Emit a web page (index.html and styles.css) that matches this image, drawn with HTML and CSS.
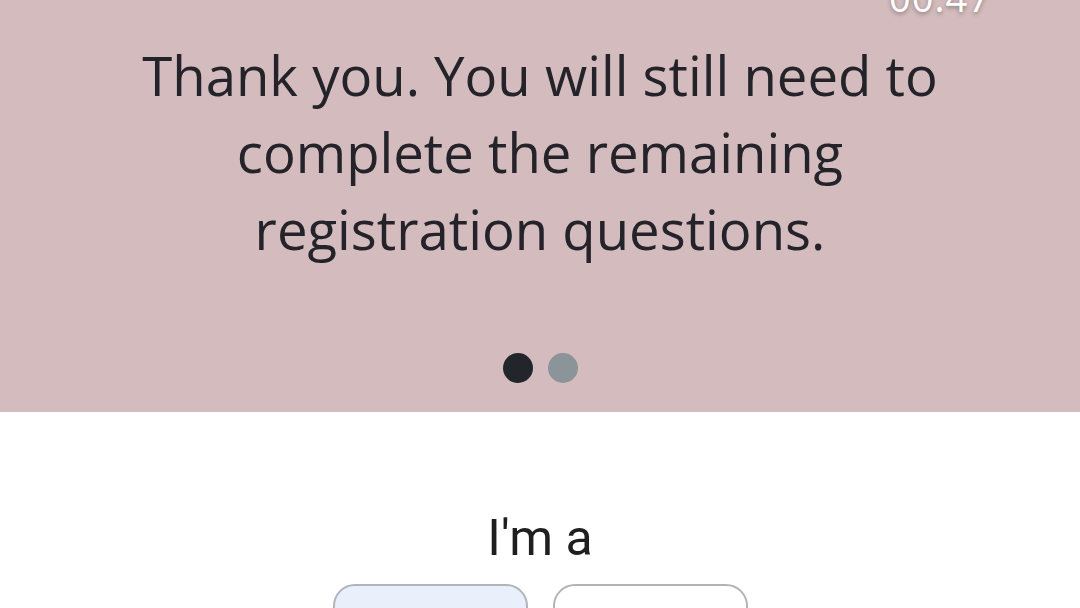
FILE: index.html
```html
<!DOCTYPE html>
<html lang="en">
<head>
<meta charset="utf-8">
<title>Registration</title>
<link rel="stylesheet" href="styles.css">
</head>
<body>
<div class="screen">
  <section class="hero">
    <div class="timer">00:47</div>
    <p class="message">Thank you. You will still need to complete the remaining registration questions.</p>
    <div class="dots">
      <span class="dot active"></span>
      <span class="dot"></span>
    </div>
  </section>
  <section class="question">
    <h2 class="prompt">I'm a</h2>
    <div class="choices">
      <button class="choice selected" type="button"></button>
      <button class="choice" type="button"></button>
    </div>
  </section>
</div>
</body>
</html>
```
FILE: styles.css
```css
html, body {
  margin: 0;
  padding: 0;
  background: #ffffff;
}

.screen {
  width: 1080px;
  height: 608px;
  overflow: hidden;
  display: flex;
  flex-direction: column;
}

.hero {
  position: relative;
  height: 412px;
  background: #d4bcbe;
  display: flex;
  flex-direction: column;
  align-items: center;
  flex-shrink: 0;
}

.timer {
  position: absolute;
  top: -29px;
  left: 889px;
  font-family: "Open Sans", sans-serif;
  font-size: 38px;
  color: #ffffff;
  text-shadow: 0 2px 4px rgba(0, 0, 0, 0.35);
  letter-spacing: 1px;
}

.message {
  margin: 37px 0 0;
  width: 900px;
  font-family: "Open Sans", sans-serif;
  font-size: 54.5px;
  line-height: 77px;
  text-align: center;
  color: #25232a;
}

.dots {
  display: flex;
  gap: 15px;
  margin-top: 85px;
}

.dot {
  width: 30px;
  height: 30px;
  border-radius: 50%;
  background: #8a9499;
}

.dot.active {
  background: #22252b;
}

.question {
  display: flex;
  flex-direction: column;
  align-items: center;
}

.prompt {
  margin: 96px 0 0;
  font-family: Roboto, sans-serif;
  font-weight: 400;
  font-size: 50px;
  line-height: 60px;
  color: #1f1f1f;
}

.choices {
  display: flex;
  gap: 25px;
  margin-top: 16px;
}

.choice {
  width: 195px;
  height: 80px;
  border: 2px solid #b1b5b9;
  border-radius: 22px;
  background: #ffffff;
  padding: 0;
}

.choice.selected {
  background: #e9f0fb;
}
```
